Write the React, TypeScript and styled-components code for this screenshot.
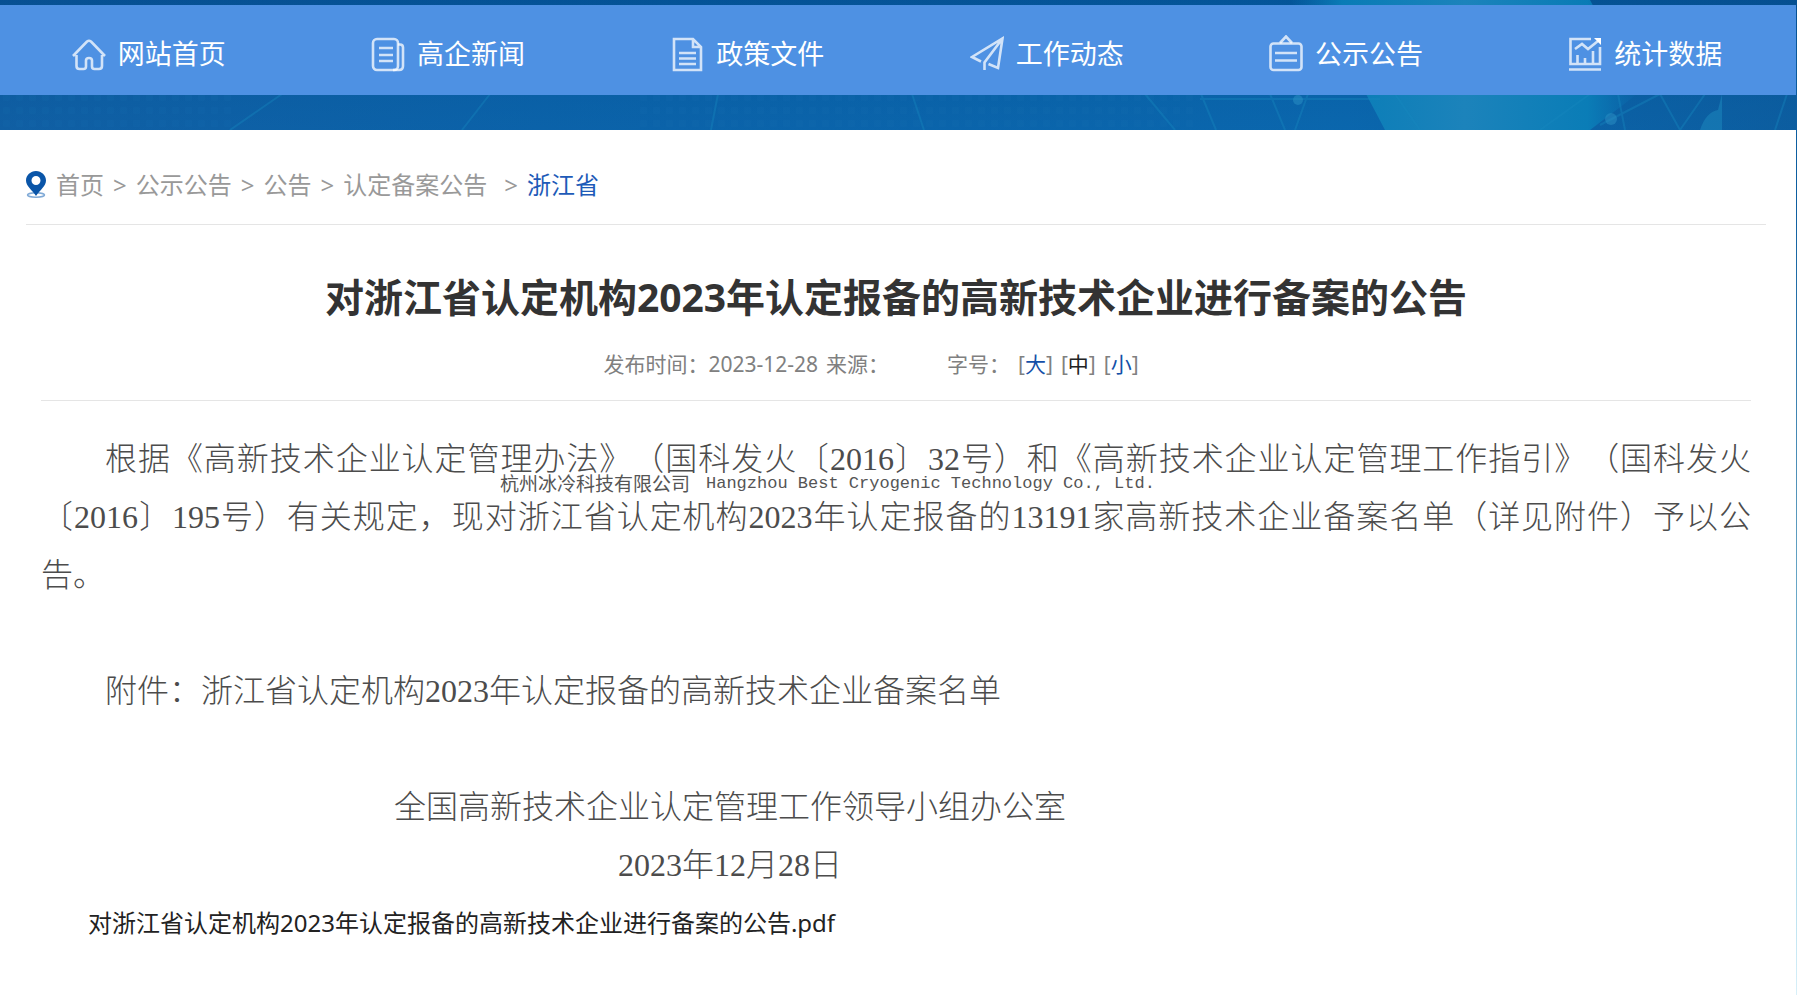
import React from 'react';
import styled, { createGlobalStyle } from 'styled-components';

const sans = '"Noto Sans", "Noto Sans CJK SC", sans-serif';

const GlobalStyle = createGlobalStyle`
  *, *::before, *::after { box-sizing: border-box; }
  body {
    margin: 0;
    background: #fff;
    font-family: ${sans};
    color: #333;
    text-spacing-trim: space-all;
  }
  a { color: inherit; text-decoration: none; }
  h1, p, ul, ol { margin: 0; padding: 0; }
  ul, ol { list-style: none; }
`;

const Page = styled.div`
  min-height: 100vh;
  background: linear-gradient(#0d5ea0 20%, #5595ba 50%, #8fcbe0 78%, #d8f0f9);
  padding-right: 1px;
  display: flex;
  flex-direction: column;
`;

const Banner = styled.header`
  position: relative;
  background: #0d60a6;
  padding: 5px 1px 35px 0;
  margin-right: -1px;
`;

const BannerArt = styled.svg`
  position: absolute;
  inset: 0;
  width: 100%;
  height: 100%;
`;

const Nav = styled.nav`
  position: relative;
  background: #4e91e3;
`;

const NavList = styled.ul`
  display: grid;
  grid-template-columns: repeat(6, 1fr);
`;

const NavLink = styled.a`
  display: flex;
  align-items: center;
  justify-content: center;
  gap: 12px;
  height: 90px;
  padding-top: 7px;
  padding-right: 2px;
  font-size: 27px;
  line-height: 36px;
  color: #fff;

  svg { display: block; }
`;

const Main = styled.main`
  flex: 1;
  background: #fff;
  padding: 0 30px 40px 26px;
`;

const Crumbs = styled.nav`
  display: flex;
  align-items: center;
  height: 95px;
  padding-top: 15px;
  border-bottom: 1px solid #e5e5e5;
  font-size: 24px;
  line-height: 32px;
  color: #999;

  svg { display: block; margin-right: 10px; }
`;

const CrumbList = styled.ol`
  display: flex;
  gap: 9px;
`;

const Crumb = styled.li<{ $last?: boolean }>`
  display: flex;
  gap: 9px;
  color: ${(p) => (p.$last ? '#1e5bb8' : '#999')};
  padding-left: ${(p) => (p.$last ? '8px' : '0')};
`;

const Separator = styled.span`
  color: #999;
`;

const Article = styled.article`
  position: relative;
  padding: 0 15px;
`;

const Title = styled.h1`
  padding-top: 45px;
  font-size: 39px;
  line-height: 54px;
  font-weight: 700;
  text-align: center;
  color: #333;
`;

const Meta = styled.div`
  display: flex;
  justify-content: center;
  align-items: center;
  height: 77px;
  padding: 4px 50px 0 0;
  border-bottom: 1px solid #e5e5e5;
  font-size: 21px;
  line-height: 28px;
  color: #808080;
`;

const MetaText = styled.span`
  margin-right: 8px;
`;

const SizeGroup = styled.div`
  display: flex;
  align-items: center;
  gap: 8px;
  margin-left: 50px;
`;

const SizeButton = styled.button<{ $current?: boolean }>`
  border: 0;
  padding: 0;
  background: none;
  font: inherit;
  color: #808080;
  cursor: pointer;

  span { color: ${(p) => (p.$current ? '#222' : '#1450a8')}; }
`;

const Body = styled.div`
  padding-top: 29px;
  font-family: "Liberation Serif", "Noto Sans CJK SC", serif;
  font-size: 32px;
  font-weight: 300;
  line-height: 58px;
  color: #4c4c4c;
`;

const Paragraph = styled.p`
  min-height: 58px;
  text-indent: 2em;
  text-align: justify;
`;

const Signature = styled.div`
  width: 1378px;
  max-width: 100%;
  text-align: center;
`;

const FileLink = styled.a`
  display: block;
  padding-left: 47px;
  font-family: ${sans};
  font-size: 24px;
  font-weight: 400;
  color: #222;
`;

const Watermark = styled.div`
  position: absolute;
  top: 246px;
  left: 474px;
  display: flex;
  align-items: center;
  gap: 16px;
  font-size: 19px;
  line-height: 26px;
  color: #555;
  white-space: nowrap;
  pointer-events: none;
`;

const WatermarkLatin = styled.span`
  font-family: "Liberation Mono", monospace;
  font-size: 17px;
`;

const Icon = ({ children }: { children: React.ReactNode }) => (
  <svg width="34" height="38" viewBox="0 0 34 38" fill="none" stroke="#fff" strokeOpacity="0.75" strokeWidth="2.6" aria-hidden="true">
    {children}
  </svg>
);

const HomeIcon = () => (
  <Icon>
    <path d="M1 21 15 6.500Q17 5 19 6.500L33 21" />
    <path d="M4.500 20V31Q4.500 34 7.500 34H11.500Q14 34 14 31.500V25.500Q14 23 17 23Q20 23 20 25.500V31.500Q20 34 22.500 34H27Q30 34 30 31V20" />
  </Icon>
);

const NewsIcon = () => (
  <Icon>
    <rect x="2" y="4" width="25" height="31" rx="4" />
    <path d="M27 9.500H29Q32 9.500 32 12.500V31Q32 35 28 35H22M8 13H22M8 20H22M8 26H22" />
  </Icon>
);

const PolicyIcon = () => (
  <Icon>
    <path d="M4 4H23L31 12V35H4ZM23 4V12H31M9 18H26M9 23.500H26M9 29H26" />
  </Icon>
);

const PlaneIcon = () => (
  <Icon>
    <path d="M11 26.500 2 22 32.500 3.500 28 33 18.500 29M32.500 3.500 14.500 27.500V35" />
  </Icon>
);

const NoticeIcon = () => (
  <Icon>
    <rect x="1.500" y="8.500" width="31" height="26.500" rx="3" />
    <path d="M11 8 17 1.500 23 8M6 18H28M6 25.500H28" />
  </Icon>
);

const ChartIcon = () => (
  <Icon>
    <path d="M23 4H2.500V29H32V12M1 34.500H33M9.500 29V20M17 29V23M25 29V16" />
    <path d="M7 14 14 9 20 14 30 6" />
    <path d="M26 3H33V10Z" fill="#fff" stroke="none" />
  </Icon>
);

const PinIcon = () => (
  <svg width="20" height="27" viewBox="0 0 20 27" aria-hidden="true">
    <ellipse cx="10" cy="24" rx="8.500" ry="2.200" fill="none" stroke="#7fa9d6" strokeWidth="1.500" />
    <path fillRule="evenodd" fill="#0a55a8" d="M10 0C4.500 0 0 4.300 0 9.500C0 15 6 19 10 25C14 19 20 15 20 9.500C20 4.300 15.500 0 10 0ZM10 5A4.500 4.500 0 1 1 10 14A4.500 4.500 0 1 1 10 5Z" />
  </svg>
);

const navItems = [
  { label: '网站首页', Glyph: HomeIcon },
  { label: '高企新闻', Glyph: NewsIcon },
  { label: '政策文件', Glyph: PolicyIcon },
  { label: '工作动态', Glyph: PlaneIcon },
  { label: '公示公告', Glyph: NoticeIcon },
  { label: '统计数据', Glyph: ChartIcon },
];

const crumbs = ['首页', '公示公告', '公告', '认定备案公告', '浙江省'];

const sizes = ['大', '中', '小'];

const NetworkArt = () => (
  <BannerArt viewBox="0 0 1797 130" preserveAspectRatio="none" aria-hidden="true">
    <defs>
      <linearGradient id="sea" x1="0" x2="1">
        <stop offset="0" stopColor="#12599c" />
        <stop offset="0.3" stopColor="#0b5ea4" />
        <stop offset="0.75" stopColor="#0a64aa" />
        <stop offset="1" stopColor="#0d5797" />
      </linearGradient>
      <linearGradient id="depth" x1="0" x2="0" y1="0" y2="1">
        <stop offset="0" stopColor="#004a8c" stopOpacity="0.600" />
        <stop offset="1" stopColor="#0b6cb4" stopOpacity="0.300" />
      </linearGradient>
      <linearGradient id="globe">
        <stop offset="0" stopColor="#0a78b8" stopOpacity="0" />
        <stop offset="0.150" stopColor="#0a80b9" stopOpacity="0.900" />
        <stop offset="0.500" stopColor="#1c83bb" />
        <stop offset="0.850" stopColor="#0a80b9" stopOpacity="0.900" />
        <stop offset="1" stopColor="#0a78b8" stopOpacity="0" />
      </linearGradient>
      <pattern id="dots" width="13" height="13" patternUnits="userSpaceOnUse">
        <rect x="3" y="3" width="7" height="7" rx="2" fill="#1b78b8" fillOpacity="0.120" />
      </pattern>
    </defs>
    <rect width="1797" height="130" fill="url(#sea)" />
    <rect width="1797" height="130" fill="url(#depth)" />
    <rect y="92" width="235" height="38" fill="url(#dots)" />
    <rect x="635" y="92" width="560" height="38" fill="url(#dots)" />
    <path d="M1290 0H1590L1640 92 1590 130H1385L1365 92Z" fill="url(#globe)" />
    <g stroke="#1687bf" strokeOpacity="0.400" strokeWidth="2" fill="none">
      <path d="M230 130 282 94M462 130 490 94M711 130 718 94M924 130 912 94M1145 94 1175 130" />
      <path d="M1201 94 1216 130M1270 94 1285 130M1308 94 1295 130M1200 99H1380M1395 94 1420 130M1540 130 1590 94M1618 94 1625 130M1660 94 1680 130 1705 94M1775 130 1787 94M1600 125 1660 94" />
    </g>
    <path d="M1700 130Q1706 112 1718 110L1722 94 1722 130Z" fill="#1b83bb" fillOpacity="0.600" />
    <circle cx="1611" cy="119" r="6" fill="#2b91c5" fillOpacity="0.500" />
    <circle cx="1298" cy="100" r="5" fill="#2b91c5" fillOpacity="0.500" />
  </BannerArt>
);

export default function App() {
  return (
    <>
      <GlobalStyle />
      <Page lang="zh-CN">
        <Banner>
          <NetworkArt />
          <Nav aria-label="主导航">
            <NavList>
              {navItems.map(({ label, Glyph }) => (
                <li key={label}>
                  <NavLink href="#">
                    <Glyph />
                    {label}
                  </NavLink>
                </li>
              ))}
            </NavList>
          </Nav>
        </Banner>
        <Main>
          <Crumbs aria-label="当前位置">
            <PinIcon />
            <CrumbList>
              {crumbs.map((name, i) => (
                <Crumb key={name} $last={i === crumbs.length - 1}>
                  {i > 0 && <Separator>&gt;</Separator>}
                  <a href="#">{name}</a>
                </Crumb>
              ))}
            </CrumbList>
          </Crumbs>
          <Article>
            <Title>对浙江省认定机构2023年认定报备的高新技术企业进行备案的公告</Title>
            <Meta>
              <MetaText>发布时间：2023-12-28</MetaText>
              <MetaText>来源：</MetaText>
              <SizeGroup>
                <span>字号：</span>
                {sizes.map((s) => (
                  <SizeButton key={s} type="button" $current={s === '中'}>
                    [<span>{s}</span>]
                  </SizeButton>
                ))}
              </SizeGroup>
            </Meta>
            <Body>
              <Paragraph>
                根据《高新技术企业认定管理办法》（国科发火〔2016〕32号）和《高新技术企业认定管理工作指引》（国科发火〔2016〕195号）有关规定，现对浙江省认定机构2023年认定报备的13191家高新技术企业备案名单（详见附件）予以公告。
              </Paragraph>
              <Paragraph />
              <Paragraph>附件：浙江省认定机构2023年认定报备的高新技术企业备案名单</Paragraph>
              <Paragraph />
              <Signature>
                <p>全国高新技术企业认定管理工作领导小组办公室</p>
                <p>2023年12月28日</p>
              </Signature>
              <FileLink href="#">对浙江省认定机构2023年认定报备的高新技术企业进行备案的公告.pdf</FileLink>
            </Body>
            <Watermark>
              <span>杭州冰冷科技有限公司</span>
              <WatermarkLatin>Hangzhou Best Cryogenic Technology Co., Ltd.</WatermarkLatin>
            </Watermark>
          </Article>
        </Main>
      </Page>
    </>
  );
}
